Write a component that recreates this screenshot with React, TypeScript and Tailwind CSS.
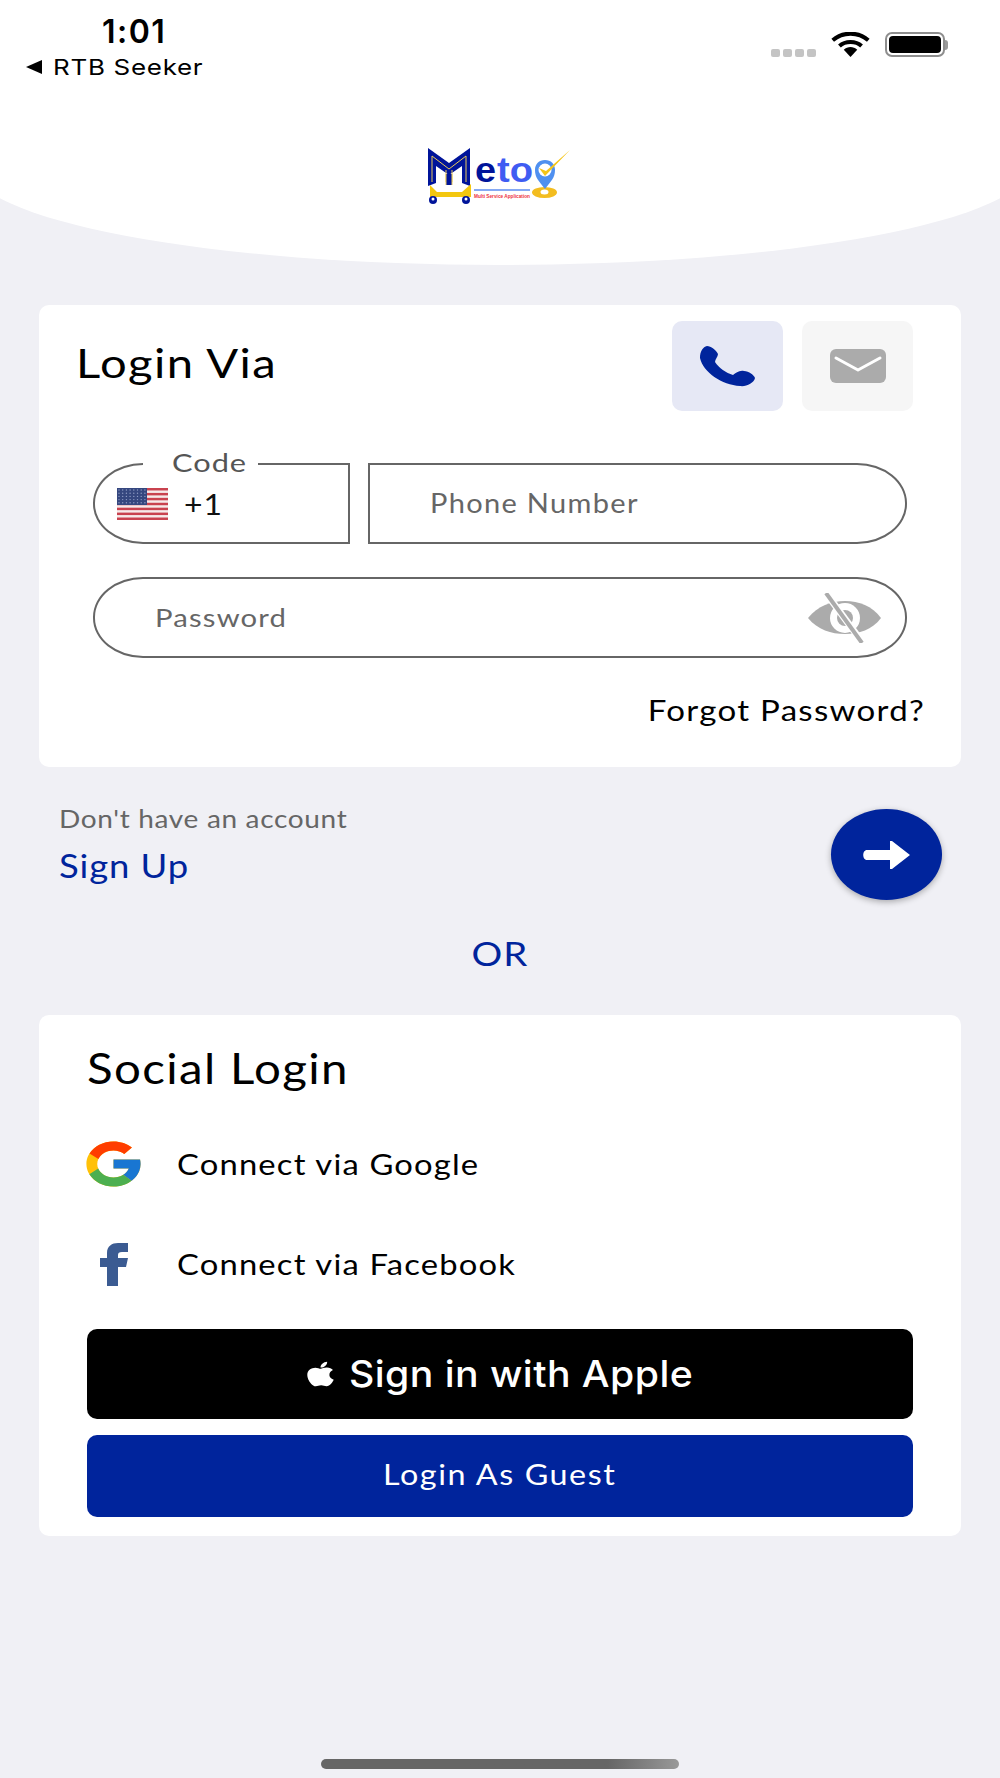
import { FaApple } from "react-icons/fa";
import { FcGoogle } from "react-icons/fc";

function WifiIcon() {
  return (
    <svg viewBox="0 0 40 26" className="h-[25px] w-[39px]">
      <path d="M20 26 13 18.500C17 14.800 23 14.800 27 18.500Z" fill="#000" />
      <path d="M8.500 14.500C14.500 9 25.500 9 31.500 14.500" fill="none" stroke="#000" strokeWidth="4.200" />
      <path d="M1.500 8.500C12 -0.500 28 -0.500 38.500 8.500" fill="none" stroke="#000" strokeWidth="4.200" />
    </svg>
  );
}

function Battery() {
  return (
    <div className="flex items-center">
      <div className="h-[25px] w-[60px] rounded-[7px] border-2 border-[#8e8e8e] p-[2px]">
        <div className="h-full w-full rounded-[4px] bg-black" />
      </div>
      <div className="h-[10px] w-[3px] rounded-r-sm bg-[#9a9a9a]" />
    </div>
  );
}

function MetooLogo() {
  return (
    <svg viewBox="0 0 150 72" className="h-[72px] w-[150px]">
      <path d="M3 8 24 23 45 8V46L37 43V26L24 35 11 26V43L3 46Z" fill="#00149a" />
      <path d="M7 16 24 29 41 16M7 16V42M41 16V42M21 30V42M27 30V42" fill="none" stroke="#e8c95a" strokeWidth="1" />
      <path d="M21 34V45H27V34Z" fill="#00149a" />
      <path d="M21 34V45M27 34V45" stroke="#e8c95a" strokeWidth="1" />
      <path d="M5 45 12 52H37L46 44V57H5Z" fill="#f3c70f" />
      <circle cx="8" cy="60" r="4" fill="#00149a" />
      <circle cx="41" cy="60" r="4" fill="#00149a" />
      <circle cx="8" cy="59" r="1.500" fill="#fff" />
      <circle cx="41" cy="59" r="1.500" fill="#fff" />
      <text x="50" y="42" fontFamily="Liberation Sans" fontWeight="700" fontSize="35" textLength="21" lengthAdjust="spacingAndGlyphs" fill="#00149a">e</text>
      <text x="72" y="42" fontFamily="Liberation Sans" fontWeight="700" fontSize="35" textLength="36" lengthAdjust="spacingAndGlyphs" fill="#3f5cf2">to</text>
      <path d="M49 50H105" stroke="#5d8cf0" strokeWidth="1.500" />
      <text x="49" y="58" fontFamily="Liberation Sans" fontWeight="700" fontSize="5" textLength="56" lengthAdjust="spacingAndGlyphs" fill="#ee3340">Multi Service Application</text>
      <ellipse cx="119.500" cy="52.500" rx="12.500" ry="5.500" fill="#f3bd20" />
      <ellipse cx="119.500" cy="52" rx="4" ry="2.500" fill="#fff" />
      <path d="M120 49C114 41 110 38 110 30 110 24 114 20 120 20 126 20 130 24 130 30 130 38 126 41 120 49Z" fill="#4f90f0" />
      <circle cx="120" cy="30" r="6.500" fill="#fff" />
      <path d="M114 28 120 36 145 10 121 31Z" fill="#f5c518" />
    </svg>
  );
}

function UsFlag() {
  const stripes = [0, 1, 2, 3, 4, 5, 6];
  const cols = [0, 1, 2, 3, 4, 5, 6, 7];
  const rows = [0, 1, 2, 3, 4];
  return (
    <svg viewBox="0 0 51 32" className="h-[32px] w-[51px] shrink-0">
      <rect width="51" height="32" fill="#f6eaea" />
      {stripes.map((i) => (
        <rect key={i} y={i * 4.92} width="51" height="2.460" fill="#c9424f" />
      ))}
      <rect width="30" height="17" fill="#35477f" />
      {rows.map((r) =>
        cols.map((c) => (
          <circle key={`${r}-${c}`} cx={2 + c * 3.7} cy={2 + r * 3.2} r="0.700" fill="#8f9cc4" />
        )),
      )}
    </svg>
  );
}

function PhoneIcon() {
  return (
    <svg viewBox="0 0 55 41" className="h-[41px] w-[55px]">
      <path
        d="M0 12C0 5 3 1 7 0 11 0 16 4 18 8 18 11 15 13 15 16 19 22 26 27 33 29 36 27 39 24 44 25 49 25 54 29 55 32 54 37 46 41 40 40 22 39 3 26 0 12Z"
        fill="#00249c"
      />
    </svg>
  );
}

function MailIcon() {
  return (
    <svg viewBox="0 0 56 34" className="h-[34px] w-[56px]">
      <rect width="56" height="34" rx="6" fill="#ababab" />
      <path d="M6 9 28 21 50 9" fill="none" stroke="#fff" strokeWidth="3" strokeLinecap="round" strokeLinejoin="round" />
    </svg>
  );
}

function EyeOffIcon() {
  return (
    <svg viewBox="0 0 74 50" className="h-[50px] w-[74px]">
      <path d="M0 25C10 13 23 8 37 8 51 8 64 13 73 25 64 37 51 41 37 41 23 41 10 37 0 25Z" fill="#ababab" />
      <circle cx="37" cy="25" r="15" fill="#fff" />
      <circle cx="37" cy="25" r="8" fill="#ababab" />
      <path d="M18 0 54 49" stroke="#fff" strokeWidth="7" />
      <path d="M18 0 54 50" stroke="#ababab" strokeWidth="4" />
    </svg>
  );
}

function ArrowIcon() {
  return (
    <svg viewBox="0 0 47 28" className="h-[28px] w-[47px]">
      <path d="M4 9H27V0H29L47 14 29 28H27V19H4C-1 19-1 9 4 9Z" fill="#fff" />
    </svg>
  );
}

function FacebookF() {
  return (
    <svg viewBox="0 0 28 43" className="h-[43px] w-[28px]">
      <path d="M7 43V24H0V15H7V10C7 3 12 0 18 0H28V9H22C19 9 18 10 18 12V15H28L26 24H18V43Z" fill="#3b5b92" />
    </svg>
  );
}

export default function App() {
  return (
    <div className="h-[1778px] w-[1000px] overflow-hidden bg-[#f0f0f5] font-['Lato',sans-serif]">
      {/* white cap, wider than the page so the curve is cut at both sides */}
      <header className="ml-[-30px] h-[265px] w-[1060px] rounded-b-[530px_100px] bg-white pl-[30px] pr-[30px]">
        <div className="flex h-[100px] w-[1000px] justify-between">
          <div className="pl-[26px]">
            <div className="pl-[76px] pt-[13px] text-[32px] font-semibold leading-[38px] tracking-[1.5px] text-black font-['Inter',sans-serif]">1:01</div>
            <div className="mt-[3px] flex items-center gap-[11px] text-[22px] leading-[26px] tracking-[0.6px] text-black font-['Inter',sans-serif]">
              <span className="h-0 w-0 border-y-[7px] border-r-[16px] border-y-transparent border-r-black" />
              <span className="inline-block origin-left scale-x-[1.18]">RTB Seeker</span>
            </div>
          </div>
          <div className="flex items-start gap-[15px] pr-[52px] pt-[32px]">
            <div className="mt-[17px] flex gap-[3px]">
              {[0, 1, 2, 3].map((i) => (
                <span key={i} className="h-[8px] w-[9px] rounded-[2px] bg-[#c4c4c4]" />
              ))}
            </div>
            <WifiIcon />
            <Battery />
          </div>
        </div>
        <div className="flex w-[1000px] justify-center pt-[40px]">
          <MetooLogo />
        </div>
      </header>

      <main className="flex flex-col px-[39px] pt-[40px]">
        <section className="h-[462px] rounded-[10px] bg-white pt-[16px]">
          <div className="flex items-center justify-between pl-[37px] pr-[48px]">
            <h1 className="pb-[7px] text-[40px] font-normal leading-[48px] tracking-[1.2px] text-black">
              <span className="inline-block origin-left scale-x-[1.18]">Login Via</span>
            </h1>
            <div className="flex gap-[19px]">
              <button className="flex h-[90px] w-[111px] items-center justify-center rounded-[10px] bg-[#e6e8f5]">
                <PhoneIcon />
              </button>
              <button className="flex h-[90px] w-[111px] items-center justify-center rounded-[10px] bg-[#f6f6f6]">
                <MailIcon />
              </button>
            </div>
          </div>

          <div className="mt-[52px] flex gap-[18px] px-[54px]">
            <div className="relative flex h-[81px] w-[257px] items-center gap-[16px] rounded-[50px_0_0_50px/40px_0_0_40px] border-2 border-[#666] pl-[22px]">
              <span className="absolute left-[48px] top-[-15px] w-[115px] bg-white pl-[29px] text-[25px] leading-[24px] tracking-[0.8px] text-[#555]">
                <span className="inline-block origin-left scale-x-[1.23]">Code</span>
              </span>
              <UsFlag />
              <span className="inline-block origin-left scale-x-[1.1] text-[29px] tracking-[1px] text-[#111]">+1</span>
            </div>
            <div className="flex h-[81px] flex-1 items-center rounded-[0_50px_50px_0/0_40px_40px_0] border-2 border-[#666] pl-[60px] text-[26px] tracking-[1.2px] text-[#666]">
              <span className="inline-block origin-left scale-x-[1.115]">Phone Number</span>
            </div>
          </div>

          <div className="mx-[54px] mt-[33px] flex h-[81px] items-center justify-between rounded-[50px/40px] border-2 border-[#666] pl-[60px] pr-[23px] text-[25px] tracking-[1px] text-[#666]">
            <span className="inline-block origin-left scale-x-[1.17]">Password</span>
            <EyeOffIcon />
          </div>

          <div className="mt-[35px] pr-[36px] text-right text-[28px] leading-[34px] tracking-[1.1px] text-black">
            <span className="inline-block origin-right scale-x-[1.18]">Forgot Password?</span>
          </div>
        </section>

        <div className="flex items-start justify-between pl-[20px] pr-[19px] pt-[42px]">
          <div className="mt-[-6px]">
            <div className="origin-left scale-x-[1.12] text-[25px] leading-[30px] tracking-[0.6px] text-[#666]">Don't have an account</div>
            <div className="mt-[14px] origin-left scale-x-[1.14] text-[32px] leading-[38px] tracking-[0.8px] text-[#00249c]">Sign Up</div>
          </div>
          <button className="flex h-[91px] w-[111px] items-center justify-center rounded-[50%] bg-[#00249c] shadow-[0_2px_6px_rgba(0,0,0,0.3)]">
            <ArrowIcon />
          </button>
        </div>

        <div className="scale-x-[1.2] pt-[35px] text-center text-[32px] leading-[38px] tracking-[1px] text-[#00249c]">OR</div>

        <section className="mt-[42px] h-[521px] rounded-[10px] bg-white pl-[48px] pr-[48px] pt-[28px]">
          <h2 className="origin-left scale-x-[1.13] text-[42px] font-normal leading-[50px] tracking-[1.2px] text-black">Social Login</h2>
          <div className="mt-[44px] flex h-[54px] items-center gap-[36px] text-[28px] tracking-[1px] text-black">
            <span className="ml-[-1px] flex h-[54px] w-[54px] shrink-0 items-center justify-center">
              <FcGoogle className="h-[54px] w-[65px] shrink-0" preserveAspectRatio="none" />
            </span>
            <span className="ml-[1px] inline-block origin-left scale-x-[1.17]">Connect via Google</span>
          </div>
          <div className="mt-[46px] flex h-[54px] items-center gap-[36px] text-[28px] tracking-[1px] text-black">
            <span className="flex h-[54px] w-[54px] shrink-0 items-center justify-center">
              <FacebookF />
            </span>
            <span className="inline-block origin-left scale-x-[1.17]">Connect via Facebook</span>
          </div>
          <button className="mt-[38px] flex h-[90px] w-full items-center justify-center rounded-[10px] bg-black text-[37px] font-medium tracking-[0.4px] text-white font-['Inter',sans-serif]">
            <FaApple className="mr-[15px] h-[28px] w-[27px]" preserveAspectRatio="none" />
            <span className="mr-[19px] inline-block origin-left scale-x-[1.06]">Sign in with Apple</span>
          </button>
          <button className="mt-[16px] flex h-[82px] w-full items-center justify-center rounded-[10px] bg-[#00249c] pb-[4px] text-[29px] tracking-[1.4px] text-white">
            <span className="inline-block scale-x-[1.114]">Login As Guest</span>
          </button>
        </section>
      </main>

      <div className="mx-auto mt-[223px] h-[10px] w-[358px] rounded-full bg-gradient-to-r from-[#666] from-80% to-[#999]" />
    </div>
  );
}
